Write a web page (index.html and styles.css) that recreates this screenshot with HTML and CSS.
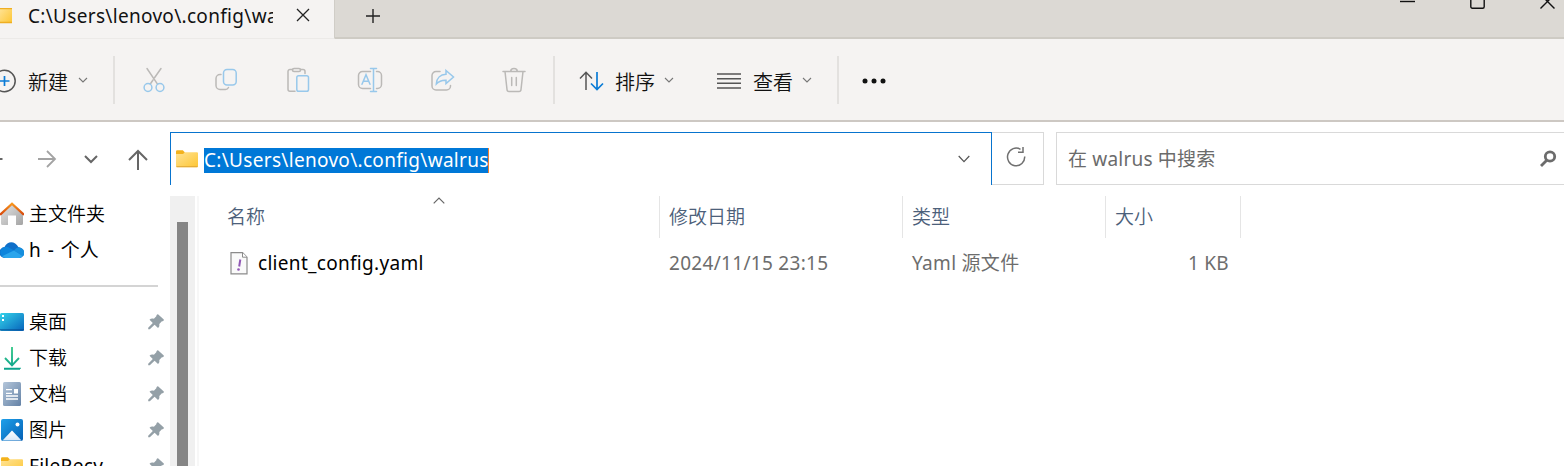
FILE: index.html
```html
<!DOCTYPE html>
<html lang="zh-CN">
<head>
<meta charset="utf-8">
<title>walrus</title>
<link rel="stylesheet" href="styles.css">
</head>
<body>
<svg class="defs" width="0" height="0">
  <defs>
    <linearGradient id="gold" x1="0" y1="0" x2="1" y2="1"><stop offset="0" stop-color="#ffe395"/><stop offset="1" stop-color="#fdc634"/></linearGradient>
    <linearGradient id="roof" x1="0" y1="0" x2="0" y2="1"><stop offset="0" stop-color="#f8961c"/><stop offset="1" stop-color="#d84a0c"/></linearGradient>
    <linearGradient id="wall" x1="0" y1="0" x2="1" y2="1"><stop offset="0" stop-color="#e4e4e4"/><stop offset="1" stop-color="#a4a4a4"/></linearGradient>
    <linearGradient id="desk" x1="0" y1="0" x2="1" y2="1"><stop offset="0" stop-color="#34d3ea"/><stop offset="1" stop-color="#0763bb"/></linearGradient>
    <linearGradient id="down" x1="0" y1="0" x2="0" y2="1"><stop offset="0" stop-color="#3ccb8c"/><stop offset="1" stop-color="#0ba38c"/></linearGradient>
    <linearGradient id="doc" x1="0" y1="0" x2="1" y2="1"><stop offset="0" stop-color="#b4c6da"/><stop offset="1" stop-color="#6482a6"/></linearGradient>
    <linearGradient id="pic" x1="0" y1="0" x2="1" y2="1"><stop offset="0" stop-color="#1ea0ea"/><stop offset="1" stop-color="#0560b4"/></linearGradient>
    <linearGradient id="snow" x1="0" y1="0" x2="0" y2="1"><stop offset="0" stop-color="#fff"/><stop offset="1" stop-color="#d8e8f8"/></linearGradient>
    <symbol id="chev" viewBox="0 0 12 8"><path d="M2 2l4 4 4-4"/></symbol>
    <symbol id="pin" viewBox="0 0 18 18"><path fill="#94a0a7" d="M11 1.2l5.8 5.3c.5 1.2-.8 1.8-1.9 1.8l-2.6 2.6c.3 2-.2 3.2-1.3 4.1l-3.4-3.3-4.8 4.600H1.200v-1.500l4.600-4.800-3.300-3.200C3.700 5.600 4.900 5.300 6.900 5.800l2.400-2.500c0-.9.600-2.300 1.700-2.100z"/></symbol>
    <symbol id="folder" viewBox="0 0 22 18"><path d="M0 1.500Q0 .3 1.200.3H6.800L9 2.500V6H0z" fill="#f3b21c"/><path d="M0 4H7L9 2.300H21Q22 2.300 22 3.300V16.200Q22 17.200 21 17.200H1Q0 17.200 0 16.200z" fill="url(#gold)"/><path d="M.5 16.700H21.500" stroke="#dfa735" fill="none"/></symbol>
  </defs>
</svg>

<header class="tabbar">
  <div class="tab">
    <svg class="tab-folder" width="12" height="16" viewBox="0 0 12 16"><rect width="12" height="15" fill="url(#gold)"/><path d="M0 .7H12M0 14.500H12" stroke="#efae22" stroke-width="1.300"/></svg>
    <span class="tab-title">C:\Users\lenovo\.config\walrus</span>
    <svg class="tab-close" width="14" height="14" viewBox="0 0 14 14"><path d="M1 1l12 12M13 1L1 13"/></svg>
  </div>
  <svg class="tab-add" width="16" height="16" viewBox="0 0 16 16"><path d="M8 1v14M1 8h14"/></svg>
  <div class="window-buttons">
    <svg width="15" height="16" viewBox="0 0 15 16"><path d="M0 1.500h15"/></svg>
    <svg width="15" height="16" viewBox="0 0 15 16"><rect x=".8" y="-6" width="13.400" height="14.200" rx="1.500"/></svg>
    <svg width="15" height="16" viewBox="0 0 15 16"><path d="M.5-5.500L14.500 8.500M14.500-5.500L.5 8.500"/></svg>
  </div>
</header>

<nav class="toolbar">
  <div class="tool new">
    <svg width="16" height="24" viewBox="0 0 16 24"><circle cx="4.500" cy="12" r="10.700" class="g"/><path class="blue" d="M-1 12H9.500M4.500 7v10"/></svg>
    <span>新建</span><svg class="chev" width="12" height="8"><use href="#chev"/></svg>
  </div>
  <div class="icons">
    <svg viewBox="0 0 26 26"><path d="M6 1.500L16.500 17.200M20 1.500l-6.300 9M12 13l-2.700 4"/><g class="b"><circle cx="7" cy="20.500" r="3.900"/><circle cx="19" cy="20.500" r="3.900"/></g></svg>
    <svg viewBox="0 0 26 26"><path d="M8 7.500H7a4 4 0 0 0-4 4v7a4 4 0 0 0 4 4h5.500q2 0 3-2"/><rect class="b" x="10.500" y="2.500" width="12.700" height="15.500" rx="3.500"/></svg>
    <svg viewBox="0 0 26 26"><path d="M10 24.300H5a2 2 0 0 1-2-2V4.500a2 2 0 0 1 2-2h2.500M15.500 2.500H18a2 2 0 0 1 2 2v2"/><rect x="7.500" y="1.500" width="8" height="3" rx="1.500"/><rect class="b" x="11.800" y="8.800" width="11.700" height="15.500" rx="1.800"/></svg>
    <svg viewBox="0 0 26 26"><path d="M13.500 4.500h-8a4 4 0 0 0-4 4v9a4 4 0 0 0 4 4h8M19.500 4.500h1a4 4 0 0 1 4 4v9a4 4 0 0 1-4 4h-1"/><path class="b" d="M16.500 1.500v23M13.500 1.500h6M13.500 24.500h6M5 17.300L9 7.800l4 9.500M6.300 14.200h5.400"/></svg>
    <svg viewBox="0 0 26 26"><path d="M11 4.500H7a4 4 0 0 0-4 4v10.500a4 4 0 0 0 4 4h10.500a4 4 0 0 0 4-4v-.5"/><path class="b" d="M17 3.500L24.500 10 17 16.500V13.200C12 13 10 14 7.300 17 7.500 11 11.500 7.500 17 7.200z"/></svg>
    <svg viewBox="0 0 26 26"><path d="M2 4.500h22M9.700 4.500a3.300 3 0 0 1 6.600 0M4 4.500l2 18a2 2 0 0 0 2 1.900h10a2 2 0 0 0 2-1.900l2-18M10.700 10.500v8M15.300 10.500v8"/></svg>
  </div>
  <div class="tool sort">
    <svg width="26" height="20" viewBox="0 0 26 20"><path class="g" d="M7 19V1.500M1 7.500l6-6.200 6 6.200"/><path class="blue" d="M18 1v17.500M12 12.500l6 6 6-6"/></svg>
    <span>排序</span><svg class="chev" width="12" height="8"><use href="#chev"/></svg>
  </div>
  <div class="tool view">
    <svg width="24" height="18" viewBox="0 0 24 18"><path class="g" d="M0 2h24M0 6.700h24M0 11.300h24M0 16h24"/></svg>
    <span>查看</span><svg class="chev" width="12" height="8"><use href="#chev"/></svg>
  </div>
  <svg class="more" width="26" height="6" viewBox="0 0 26 6"><circle cx="4" cy="3" r="2.500"/><circle cx="13" cy="3" r="2.500"/><circle cx="22" cy="3" r="2.500"/></svg>
</nav>

<div class="addressbar">
  <div class="nav">
    <svg class="back" width="3" height="24" viewBox="0 0 3 24"><path d="M0 12h2.500"/></svg>
    <svg class="fwd" width="20" height="18" viewBox="0 0 20 18"><path d="M1 9h17M10 1l8 8-8 8"/></svg>
    <svg class="recent" width="14" height="10" viewBox="0 0 14 10"><path d="M1 2l6 6 6-6"/></svg>
    <svg class="up" width="20" height="22" viewBox="0 0 20 22"><path d="M10 21V2M1 11l9-9 9 9"/></svg>
  </div>
  <div class="path">
    <svg width="22" height="18"><use href="#folder"/></svg>
    <span class="selected">C:\Users\lenovo\.config\walrus</span>
    <svg class="drop" width="12" height="8" viewBox="0 0 12 8"><path d="M.7 1l5.300 5.700L11.300 1"/></svg>
  </div>
  <div class="refresh"><svg width="20" height="22" viewBox="0 0 20 22"><path d="M14.500 3.300A8.600 8.900 0 1 0 18.700 10.500M17 1v5.200h-5"/></svg></div>
  <div class="search"><span>在 walrus 中搜索</span>
    <svg width="18" height="18" viewBox="0 0 18 18"><circle cx="11" cy="6.500" r="4.700"/><path d="M7.500 10.500L2 16"/></svg>
  </div>
</div>

<main class="body">
  <aside class="sidebar">
    <div class="item"><svg class="ico" viewBox="0 0 24 24"><path d="M1 11L12 2l11 10v9.500q0 1.500-1.500 1.500H16v-9.500H8V23H2.500Q1 23 1 21.500z" fill="url(#wall)"/><path d="M.7 12.200L12 1.700l11.300 10.500" fill="none" stroke="url(#roof)" stroke-width="2.300" stroke-linecap="round"/></svg><span>主文件夹</span></div>
    <div class="item"><svg class="ico" viewBox="0 0 24 24"><path d="M5.500 20A5.500 5.500 0 0 1 4.500 9C7 3.500 14.500 2 18.500 9.300 26 10.500 25.500 20 19 20z" fill="#0f6fc9"/><path d="M4.500 9q3-1 6 1.500L15 13 2 18.500Q-2.500 12 4.500 9z" fill="#0c84dc"/><path d="M18.500 9.300C26 10 25.500 18 22.500 18L14 12.500q2-3 4.500-3.200z" fill="#168edd"/><path d="M2 18.200L14 12.500l8.700 5.500Q21.500 20 19 20H5.500Q3.500 20 2 18.200z" fill="#2aa5ec"/></svg><span class="account">h - 个人</span></div>
    <div class="divider"></div>
    <div class="item"><svg class="ico" viewBox="0 0 24 24"><rect y="3" width="24" height="18" rx="1.500" fill="url(#desk)"/><path d="M2 6h2M2 10h2" stroke="#fff" stroke-width="2"/><path d="M0 19.800h24" stroke="#084b91" stroke-width="1.500" opacity=".6"/></svg><span>桌面</span><svg class="pin"><use href="#pin"/></svg></div>
    <div class="item"><svg class="ico" viewBox="0 0 24 24"><path d="M12 1v18M5 12l7 7.300L19 12M4 22.700h16v.01" fill="none" stroke="url(#down)" stroke-width="1.900"/></svg><span>下载</span><svg class="pin"><use href="#pin"/></svg></div>
    <div class="item"><svg class="ico" viewBox="0 0 24 24"><rect x="3" y="0" width="18" height="24" rx="1.500" fill="url(#doc)"/><path d="M6 7.700h6M6 11.300h6M6 14h12M6 17h12" stroke="#fff" stroke-width="1.300"/><rect x="14" y="7" width="4" height="4.500" fill="#fff"/></svg><span>文档</span><svg class="pin"><use href="#pin"/></svg></div>
    <div class="item"><svg class="ico" viewBox="0 0 24 24"><rect x="1" y="1" width="22" height="22" rx="2" fill="url(#pic)"/><path d="M2.500 22.500L12 12.500l9.500 10z" fill="url(#snow)"/><circle cx="17.500" cy="6.500" r="2" fill="#fff"/></svg><span>图片</span><svg class="pin"><use href="#pin"/></svg></div>
    <div class="item"><svg class="ico fold"><use href="#folder"/></svg><span class="latin">FileRecv</span><svg class="pin"><use href="#pin"/></svg></div>
  </aside>
  <div class="scrollbar"><div class="thumb"></div></div>
  <section class="files">
    <div class="row head">
      <div class="c name">名称<svg class="asc" width="12" height="7" viewBox="0 0 12 7"><path d="M.7 6.300L6 1l5.300 5.300"/></svg></div>
      <div class="c">修改日期</div>
      <div class="c">类型</div>
      <div class="c">大小</div>
    </div>
    <div class="row file">
      <div class="c name"><svg width="18" height="23" viewBox="0 0 18 23"><path d="M1 .7h11.500L17 5.200v16.600H1z" fill="#fafafa" stroke="#8b8b8b" stroke-width="1.200"/><path d="M12.500.7v4.500H17" fill="#fff" stroke="#8b8b8b"/><path d="M10.300 7.500L9.200 14.500" stroke="#9057b5" stroke-width="2"/><circle cx="8.500" cy="17.500" r="1.300" fill="#9057b5"/></svg><span>client_config.yaml</span></div>
      <div class="c date">2024/11/15 23:15</div>
      <div class="c type">Yaml 源文件</div>
      <div class="c size">1 KB</div>
    </div>
  </section>
</main>
</body>
</html>
```
FILE: styles.css
```css
* { box-sizing: border-box; }
body {
  margin: 0;
  width: 1564px;
  height: 466px;
  overflow: hidden;
  display: flex;
  flex-direction: column;
  background: #fff;
  font: 19px/24px "Noto Sans", "Noto Sans CJK SC", sans-serif;
  color: #000;
}
svg { flex: none; fill: none; display: block; }
span { white-space: nowrap; }
.defs { position: absolute; }

.tabbar { height: 39px; flex: none; display: flex; background: linear-gradient(#dcd9d4 37px, #cecbc4 37px); }
.tab { width: 335px; display: flex; align-items: flex-start; background: #f5f3f2; border-bottom: 1px solid #eceae8; border-right: 1px solid #d0cdc7; }
.tab-folder { margin-top: 8px; }
.tab-title { margin: 4px 0 0 16px; width: 245px; overflow: hidden; color: #111; letter-spacing: .31px; }
.tab-close { margin: 8px 0 0 23px; stroke: #222; stroke-width: 1.3; }
.tab-add { margin: 8px 0 0 30px; stroke: #222; stroke-width: 1.4; }
.window-buttons { display: flex; gap: 55px; margin: 0 9px 0 auto; stroke: #111; stroke-width: 1.4; }

.toolbar { height: 83px; flex: none; display: flex; align-items: center; background: #f5f3f2; border-bottom: 2px solid #cdc8c3; font-size: 20px; font-weight: 350; color: #111; }
.tool { height: 48px; display: flex; align-items: center; }
.tool > svg:first-child { margin-top: 2px; }
.tool span { margin-top: 6px; }
.g { stroke: #555; stroke-width: 1.5; }
.blue { stroke: #0a7bd6; stroke-width: 1.7; }
.chev { stroke: #777; stroke-width: 1.1; }
.new { width: 115px; border-right: 2px solid #e3e1df; }
.new span { margin-left: 12px; margin-right: 9px; }
.icons { height: 48px; width: 440px; padding-left: 26px; display: flex; align-items: center; gap: 46px; border-right: 2px solid #e3e1df; }
.icons svg { width: 26px; height: 26px; stroke: #bbb9b7; stroke-width: 1.5; stroke-linecap: round; }
.icons svg .b { stroke: #98c8eb; }
.sort { padding-left: 24px; }
.sort span { margin-left: 10px; margin-right: 8px; }
.view { width: 164px; padding-left: 42px; border-right: 2px solid #e3e1df; }
.view span { margin-left: 12px; margin-right: 8px; }
.more { margin: 2px 0 0 22px; fill: #111; }

.addressbar { height: 74px; flex: none; padding-top: 10px; display: flex; align-items: flex-start; color: #6b6b6b; }
.nav { width: 170px; height: 53px; display: flex; align-items: center; stroke: #666; stroke-width: 2; }
.fwd { margin-left: 34px; stroke: #a3a3a3; stroke-width: 1.8; }
.recent { margin-left: 27px; }
.up { margin-left: 30px; margin-top: 2px; }
.path { width: 822px; height: 53px; padding-left: 5px; display: flex; align-items: center; border: 1px solid #0874ce; border-bottom: 0; }
.selected { margin-left: 6px; margin-top: 2px; height: 25px; line-height: 25px; width: 285px; background: #0078d7; color: #fff; border-right: 1px solid #f08030; letter-spacing: .31px; }
.drop { margin: 0 21px 0 auto; stroke: #555; stroke-width: 1.2; }
.refresh { width: 52px; height: 53px; padding: 13px 0 0 14px; border: 1px solid #d9d9d9; border-left: 0; stroke: #707070; stroke-width: 1.5; }
.search { margin-left: 12px; flex: 1; height: 53px; padding: 0 7px 0 11px; display: flex; align-items: center; justify-content: space-between; border: 1px solid #d9d9d9; border-right: 0; letter-spacing: .2px; }
.search svg { stroke: #6c6c6c; stroke-width: 2.8; }

.body { flex: 1; min-height: 0; display: flex; }
.sidebar { width: 170px; height: 270px; overflow: hidden; font-weight: 350; }
.item { height: 36px; display: flex; align-items: center; }
.ico { width: 24px; height: 24px; }
.fold { height: 18px; }
.item span { margin-left: 5px; }
.item .account { font-weight: 400; word-spacing: 2px; }
.item .latin { font-weight: 400; letter-spacing: .3px; }
.pin { width: 18px; height: 18px; margin: 0 5px 0 auto; }
.divider { height: 36px; width: 158px; background: linear-gradient(#d4d4d4, #d4d4d4) 0 17px / 100% 2px no-repeat; }
.scrollbar { width: 25px; padding: 26px 7px 0; background: #f0f0f0; }
.thumb { height: 100%; background: #858585; }
.files { margin-left: 2px; border-left: 2px solid #f7f7f7; width: 1050px; }
.row { display: grid; grid-template-columns: 461px 243px 203px 135px; }
.head { height: 42px; color: #4c607a; font-weight: 350; }
.head .c { padding: 9px 0 0 9px; border-right: 1px solid #e5e5e5; }
.head .name { display: flex; padding-left: 28px; }
.asc { margin: -8px 0 0 168px; stroke: #666; stroke-width: 1.2; }
.file { height: 50px; align-items: center; color: #6d6d6d; letter-spacing: .3px; }
.file .c { padding-left: 9px; }
.file .name { display: flex; align-items: center; padding-left: 31px; color: #000; }
.file .name span { margin-left: 10px; }
.file .size { padding-right: 12px; text-align: right; }
```
